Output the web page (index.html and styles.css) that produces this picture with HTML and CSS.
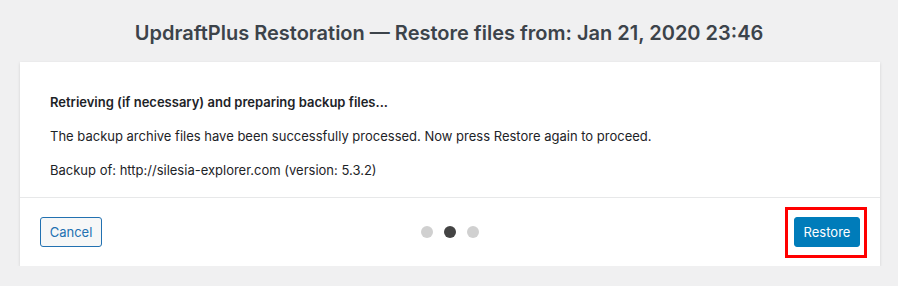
FILE: index.html
```html
<!DOCTYPE html>
<html lang="en">

<head>
    <meta charset="UTF-8">
    <meta name="viewport" content="width=device-width, initial-scale=1.0">
    <link rel="stylesheet" href="styles.css">
</head>

<body>
    <h1 class="title">UpdraftPlus Restoration — Restore files from: Jan 21, 2020 23:46</h1>

    <div class="card">
        <div class="card-body">
            <p class="step-title">Retrieving (if necessary) and preparing backup files...</p>
            <p>The backup archive files have been successfully processed. Now press Restore again to proceed.</p>
            <p>Backup of: http://silesia-explorer.com (version: 5.3.2)</p>
        </div>
        <div class="card-footer">
            <div class="footer-left">
                <button class="btn btn-secondary">Cancel</button>
            </div>
            <div class="steps">
                <span class="dot"></span>
                <span class="dot active"></span>
                <span class="dot"></span>
            </div>
            <div class="footer-right">
                <div class="highlight">
                    <button class="btn btn-primary">Restore</button>
                </div>
            </div>
        </div>
    </div>
</body>

</html>
```

FILE: styles.css
```css
body {
    margin: 0;
    background: #f0f0f1;
    font-family: "Inter", "Liberation Sans", sans-serif;
    font-size: 13px;
    color: #1d2327;
}

.title {
    margin: 0;
    padding: 21px 0 0;
    height: 41px;
    text-align: center;
    font-size: 20px;
    font-weight: 600;
    color: #3c434a;
}

.card {
    margin: 0 18px 0 20px;
    background: #fff;
    box-shadow: 0 1px 3px rgba(0, 0, 0, 0.13);
}

.card-body {
    padding: 33px 30px 19px;
    border-bottom: 1px solid #e7e8e9;
}

.card-body p {
    margin: 0 0 19px;
    line-height: 15px;
}

.card-body p:last-child {
    margin-bottom: 0;
}

.step-title {
    font-weight: 600;
}

.card-footer {
    display: grid;
    grid-template-columns: 1fr auto 1fr;
    align-items: center;
    height: 68px;
    padding: 0 13px;
}

.footer-left {
    padding-left: 7px;
}

.footer-right {
    display: flex;
    justify-content: flex-end;
}

.btn {
    font-family: inherit;
    font-size: 13px;
    height: 30px;
    border-radius: 3px;
    padding: 0;
    cursor: pointer;
}

.btn-secondary {
    width: 62px;
    background: #f6f7f7;
    border: 1px solid #2271b1;
    color: #2271b1;
}

.btn-primary {
    width: 66px;
    background: #007cba;
    border: 1px solid #007cba;
    color: #fff;
}

.steps {
    display: flex;
    gap: 11px;
}

.dot {
    width: 12px;
    height: 12px;
    border-radius: 50%;
    background: #d0d0d0;
}

.dot.active {
    background: #444;
}

.highlight {
    border: 3px solid #f00;
    padding: 7px 4px 8px 6px;
    display: flex;
}
```
